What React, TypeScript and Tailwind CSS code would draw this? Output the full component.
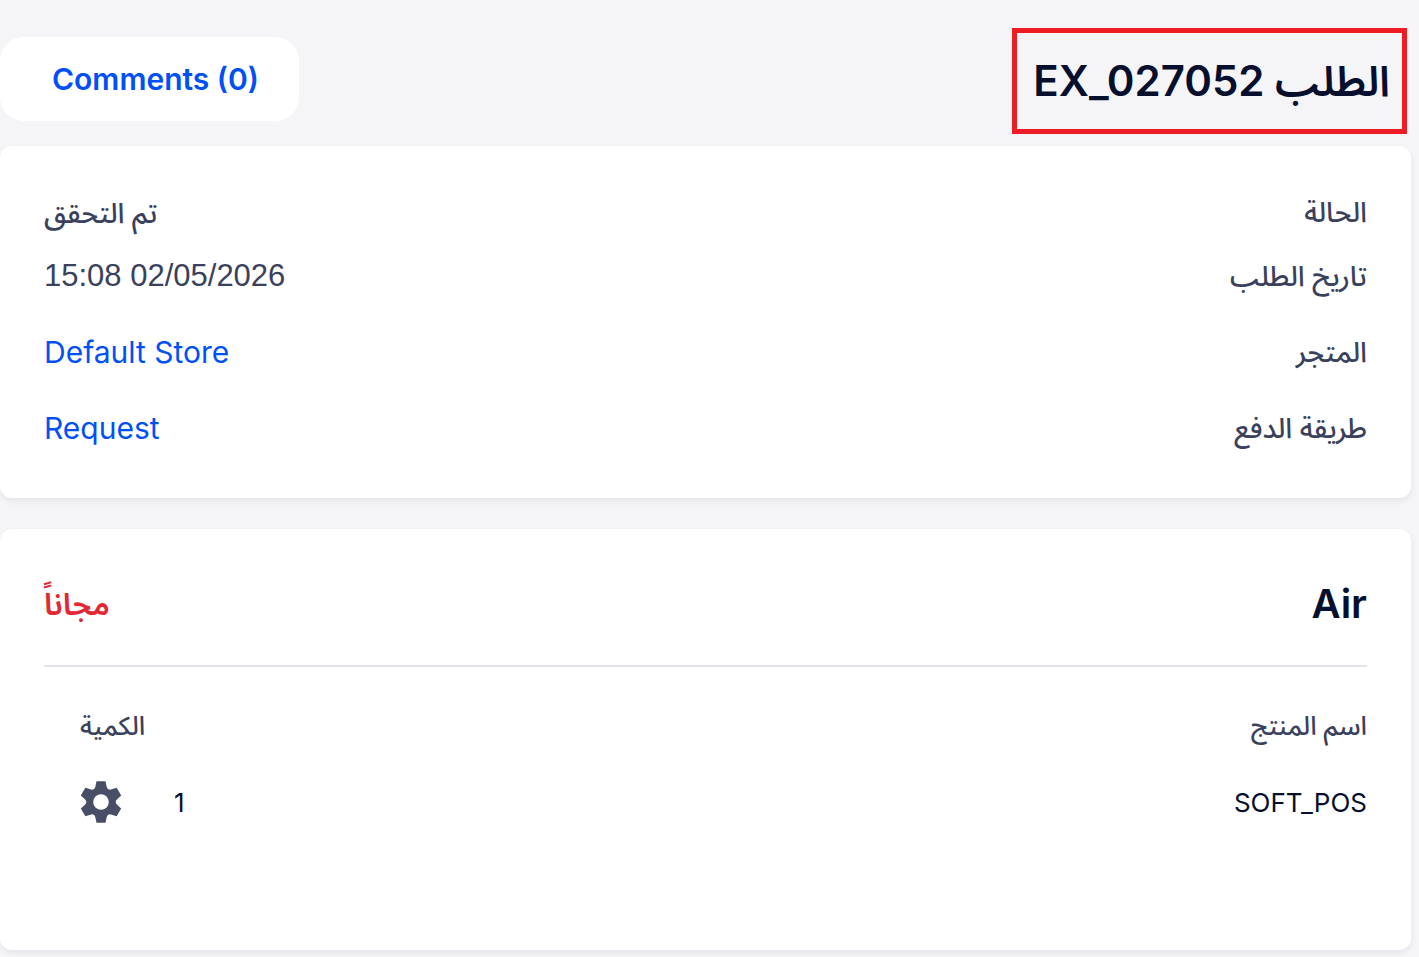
import type { ReactNode } from "react";

interface Detail {
  label: string;
  value: ReactNode;
  height: string;
}

const details: Detail[] = [
  {
    label: "الحالة",
    value: <span className="text-[28px] font-medium">تم التحقق</span>,
    height: "h-14",
  },
  {
    label: "تاريخ الطلب",
    value: (
      <bdi dir="ltr" className="font-['Liberation_Sans',sans-serif] text-[31px]">
        15:08 02/05/2026
      </bdi>
    ),
    height: "h-[72px]",
  },
  {
    label: "المتجر",
    value: <a href="#store" className="text-[#0050f5]">Default Store</a>,
    height: "h-20",
  },
  {
    label: "طريقة الدفع",
    value: <a href="#request" className="text-[#0050f5]">Request</a>,
    height: "h-[72px]",
  },
];

const products = [{ name: "SOFT_POS", quantity: 1 }];

const GearIcon = () => (
  <svg width="42" height="42" viewBox="-21 -21 42 42" aria-hidden="true">
    <g fill="#484e66">
      <circle r="13.5" />
      {[0, 60, 120, 180, 240, 300].map((angle) => (
        <path
          key={angle}
          transform={`rotate(${angle})`}
          d="M0 0L-7.5 -12.5Q-6 -13.6 -5.6 -15.6L-4.5 -20.7H4.5L5.6 -15.6Q6 -13.6 7.5 -12.5Z"
        />
      ))}
    </g>
    <circle r="7.8" fill="#fff" />
  </svg>
);

const Card = ({ children }: { children: ReactNode }) => (
  <section className="rounded-xl bg-white px-11 shadow-[0_3px_6px_rgba(20,25,50,0.07)]">
    {children}
  </section>
);

const Header = () => (
  <header className="flex items-start justify-between pt-7 pb-3">
    <h1 className="ms-3 border-5 border-[#ee1c25] ps-3 pe-4 py-5 text-[42px] leading-[56px] font-semibold text-[#070f2e]">
      الطلب EX_027052
    </h1>

    <button
      type="button"
      className="mt-[9px] h-[84px] rounded-3xl bg-white pr-10 pl-13 text-[30px] font-semibold text-[#0050f5]"
      dir="ltr"
    >
      Comments (0)
    </button>
  </header>
);

const OrderDetails = () => (
  <Card>
    <dl className="pt-[38px] pb-[34px] text-[30px] text-[#3a415c]">
      {details.map(({ label, value, height }) => (
        <div key={label} className={`flex items-center justify-between ${height}`}>
          <dt className="text-[28px] font-medium">{label}</dt>
          <dd>{value}</dd>
        </div>
      ))}
    </dl>
  </Card>
);

const OrderItems = () => (
  <Card>
    <div className="flex h-[138px] items-center justify-between border-b-2 border-[#e3e4e9] pt-3.5">
      <h2 className="text-[40px] font-semibold text-[#070f2e]">Air</h2>
      <p className="text-[31px] leading-[48px] font-semibold text-[#e22832]">مجاناً</p>
    </div>

    <table className="mt-5 mb-[110px] w-full text-[26px]">
      <thead>
        <tr className="h-[77px] text-[#3a415c]">
          <th className="text-start font-medium">اسم المنتج</th>
          <th className="pe-9 text-end font-medium">الكمية</th>
        </tr>
      </thead>
      <tbody>
        {products.map(({ name, quantity }) => (
          <tr key={name} className="h-[76px] text-[#070f2e]">
            <td>{name}</td>
            <td className="pe-9">
              <div className="flex items-center justify-end gap-13">
                {quantity}
                <button type="button" aria-label="الإعدادات">
                  <GearIcon />
                </button>
              </div>
            </td>
          </tr>
        ))}
      </tbody>
    </table>
  </Card>
);

const App = () => {
  return (
    <div
      dir="rtl"
      lang="ar"
      className="min-h-screen bg-[#f5f5f8] font-['Inter','Noto_Sans_Arabic','DejaVu_Sans',sans-serif]"
    >
      <Header />

      <main className="flex flex-col gap-[31px] ps-2">
        <OrderDetails />
        <OrderItems />
      </main>
    </div>
  );
};

export default App;
